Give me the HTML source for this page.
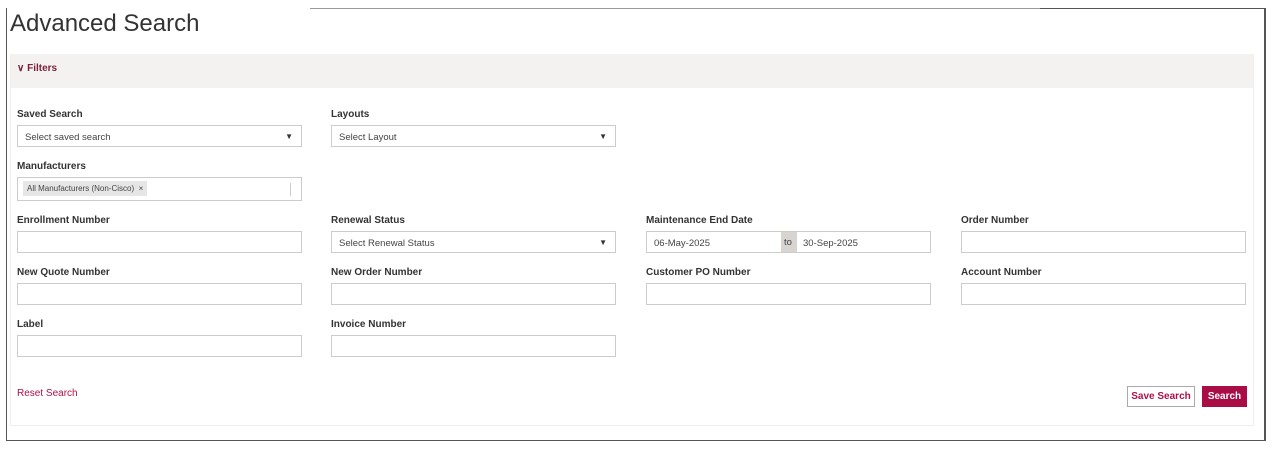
<!DOCTYPE html>
<html><head><style>
*{box-sizing:border-box;margin:0;padding:0}
body{width:1280px;height:450px;background:#fff;font-family:"Liberation Sans",sans-serif;position:relative;overflow:hidden;color:#333}
.a{position:absolute}
.lbl{position:absolute;font-size:10px;font-weight:bold;color:#333}
.inp{position:absolute;width:285px;height:22px;border:1px solid #ccc;background:#fff;font-size:9.5px;color:#444;padding:6px 7px}
.arr{position:absolute;right:8px;top:6px;font-size:8px;color:#333}
</style></head><body>
<div class="a" style="left:310px;top:8px;width:730px;height:1px;background:#999"></div>
<div class="a" style="left:1040px;top:8px;width:225px;height:1px;background:#555"></div>
<div class="a" style="left:6px;top:8px;width:1px;height:433px;background:#555"></div>
<div class="a" style="left:1264px;top:8px;width:2px;height:433px;background:#555"></div>
<div class="a" style="left:6px;top:440px;width:1260px;height:1px;background:#555"></div>
<div class="a" style="left:10px;top:10px;font-size:24px;color:#333">Advanced Search</div>
<div class="a" style="left:10px;top:54px;width:1244px;height:372px;border:1px solid #eee"></div>
<div class="a" style="left:10px;top:54px;width:1244px;height:34px;background:#f4f2f0"></div>
<div class="a" style="left:17px;top:63px;font-size:10px;font-weight:bold;color:#7a1e3c">&#8744; Filters</div>

<div class="lbl" style="left:17px;top:109px">Saved Search</div>
<div class="inp" style="left:17px;top:125px">Select saved search<span class="arr">▼</span></div>
<div class="lbl" style="left:331px;top:109px">Layouts</div>
<div class="inp" style="left:331px;top:125px">Select Layout<span class="arr">▼</span></div>
<div class="lbl" style="left:17px;top:161px">Manufacturers</div>
<div class="inp" style="left:17px;top:177px;height:24px;padding:3px 5px"><span style="display:inline-block;background:#e6e6e6;font-size:8px;padding:3px 4px">All Manufacturers (Non-Cisco) &nbsp;×</span><span class="a" style="right:10px;top:5px;width:1px;height:13px;background:#ccc"></span></div>

<div class="lbl" style="left:17px;top:215px">Enrollment Number</div>
<div class="inp" style="left:17px;top:231px"></div>
<div class="lbl" style="left:331px;top:215px">Renewal Status</div>
<div class="inp" style="left:331px;top:231px">Select Renewal Status<span class="arr">▼</span></div>
<div class="lbl" style="left:646px;top:215px">Maintenance End Date</div>
<div class="inp" style="left:646px;top:231px;padding:0">
<span class="a" style="left:7px;top:6px">06-May-2025</span>
<span class="a" style="left:134px;top:0;width:16px;height:20px;background:#d8d4d2;padding:5px 3px">to</span>
<span class="a" style="left:156px;top:6px">30-Sep-2025</span></div>
<div class="lbl" style="left:961px;top:215px">Order Number</div>
<div class="inp" style="left:961px;top:231px"></div>

<div class="lbl" style="left:17px;top:267px">New Quote Number</div>
<div class="inp" style="left:17px;top:283px"></div>
<div class="lbl" style="left:331px;top:267px">New Order Number</div>
<div class="inp" style="left:331px;top:283px"></div>
<div class="lbl" style="left:646px;top:267px">Customer PO Number</div>
<div class="inp" style="left:646px;top:283px"></div>
<div class="lbl" style="left:961px;top:267px">Account Number</div>
<div class="inp" style="left:961px;top:283px"></div>

<div class="lbl" style="left:17px;top:319px">Label</div>
<div class="inp" style="left:17px;top:335px"></div>
<div class="lbl" style="left:331px;top:319px">Invoice Number</div>
<div class="inp" style="left:331px;top:335px"></div>

<div class="a" style="left:17px;top:388px;font-size:10px;color:#b0104a">Reset Search</div>
<div class="a" style="left:1127px;top:386px;width:68px;height:21px;border:1px solid #aaa;font-size:10px;color:#b0104a;font-weight:bold;text-align:center;line-height:19px">Save Search</div>
<div class="a" style="left:1202px;top:386px;width:45px;height:21px;background:#a80d45;font-size:10px;color:#fff;font-weight:bold;text-align:center;line-height:21px">Search</div>
</body></html>
